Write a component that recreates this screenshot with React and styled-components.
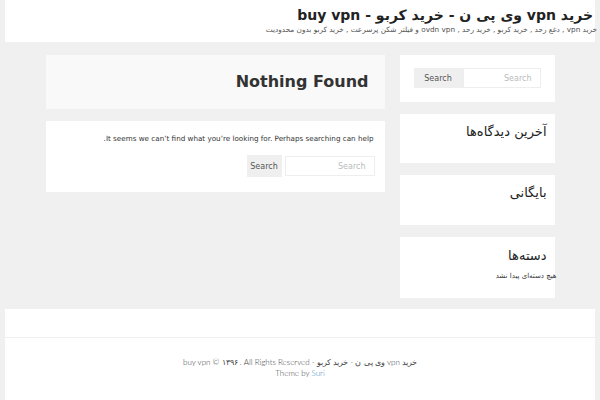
import React from 'react';
import styled, { createGlobalStyle } from 'styled-components';

const GlobalStyle = createGlobalStyle`
  html, body {
    margin: 0;
    padding: 0;
    background: #f0f0f0;
  }
  body {
    direction: rtl;
    font-family: "DejaVu Sans", sans-serif;
    color: #333;
  }
`;

const Header = styled.header`
  margin: 0 5px;
  height: 42px;
  background: #fff;
  padding: 7px 2px 0 0;
  box-sizing: border-box;
  text-align: right;
`;

const SiteTitle = styled.h1`
  margin: 0;
  font-size: 14px;
  line-height: 17px;
  font-weight: bold;
  color: #222;
`;

const Tagline = styled.p`
  margin: 0 -4px 0 0;
  font-size: 7.3px;
  line-height: 12px;
  color: #555;
  white-space: nowrap;
`;

const Content = styled.div`
  width: 509px;
  margin: 13px auto 0;
  display: flex;
  gap: 15px;
  align-items: flex-start;
`;

const Sidebar = styled.aside`
  width: 155px;
  display: flex;
  flex-direction: column;
  gap: 12px;
`;

const Main = styled.main`
  width: 339px;
  display: flex;
  flex-direction: column;
  gap: 12px;
`;

const Box = styled.section`
  background: ${p => (p.$tint ? '#f9f9f9' : '#fff')};
  height: ${p => p.$h}px;
  box-sizing: border-box;
  padding: ${p => p.$pad || '0'};
`;

const PageTitle = styled.h2`
  margin: 0;
  font-size: 16px;
  line-height: 54px;
  font-weight: bold;
  color: #333;
  padding-right: 16px;
`;

const Notice = styled.p`
  margin: 0;
  padding: 12px 11px 0 0;
  font-size: 7.2px;
  line-height: 12px;
  color: #333;
`;

const SearchForm = styled.form`
  display: flex;
  align-items: center;
  gap: ${p => p.$gap || 0}px;
  margin: ${p => p.$m || 0};
`;

const SearchInput = styled.input`
  width: ${p => p.$w}px;
  height: 20px;
  box-sizing: border-box;
  border: 1px solid #eee;
  background: #fff;
  font: 8px "DejaVu Sans", sans-serif;
  padding: 0 8px;
  direction: rtl;
  outline: none;
  &::placeholder { color: #bbb; }
`;

const SearchButton = styled.button`
  width: ${p => p.$w}px;
  height: ${p => p.$h || 20}px;
  border: none;
  background: #efefef;
  color: #555;
  font: 8px "DejaVu Sans", sans-serif;
  padding: 0;
`;

const WidgetTitle = styled.h3`
  margin: 0;
  padding: ${p => p.$top || 10}px 8px 0 0;
  font-size: 13px;
  font-weight: normal;
  line-height: 16px;
  letter-spacing: 1.2px;
  color: #222;
`;

const WidgetText = styled.p`
  margin: 8px -2px 0 0;
  font-size: 7px;
  line-height: 9px;
  color: #333;
`;

const Footer = styled.footer`
  margin: 11px 5px 0;
  background: #fff;
`;

const FooterTop = styled.div`
  height: 28px;
  border-bottom: 1px solid #eee;
`;

const FooterBottom = styled.div`
  height: 80px;
  padding-top: 19px;
  box-sizing: border-box;
  text-align: center;
  font-family: Lato, sans-serif;
  font-weight: 300;
  font-size: 8px;
  line-height: 11px;
  color: #444;
`;

const Link = styled.a`
  color: #4a8fc2;
  text-decoration: none;
`;

export default function App() {
  return (
    <>
      <GlobalStyle />
      <Header>
        <SiteTitle>خرید vpn وی پی ن - خرید کربو - buy vpn</SiteTitle>
        <Tagline>خرید vpn , دغع رحد , خرید کربو , خرید رحد , ovdn vpn و فیلتر شکن پرسرعت , خرید کربو بدون محدودیت</Tagline>
      </Header>
      <Content>
        <Sidebar>
          <Box $h={47} $pad="13px 14px 0 0">
            <SearchForm>
              <SearchInput $w={78} placeholder="Search" />
              <SearchButton $w={49} type="button">Search</SearchButton>
            </SearchForm>
          </Box>
          <Box $h={49}>
            <WidgetTitle>آخرین دیدگاه‌ها</WidgetTitle>
          </Box>
          <Box $h={50}>
            <WidgetTitle>بایگانی</WidgetTitle>
          </Box>
          <Box $h={61}>
            <WidgetTitle $top={11}>دسته‌ها</WidgetTitle>
            <WidgetText>هیچ دسته‌ای پیدا نشد</WidgetText>
          </Box>
        </Sidebar>
        <Main>
          <Box $h={54} $tint>
            <PageTitle>Nothing Found</PageTitle>
          </Box>
          <Box $h={71}>
            <Notice>It seems we can’t find what you’re looking for. Perhaps searching can help.</Notice>
            <SearchForm $gap={3} $m="10px 10px 0 0">
              <SearchInput $w={90} placeholder="Search" />
              <SearchButton $w={35} $h={22} type="button">Search</SearchButton>
            </SearchForm>
          </Box>
        </Main>
      </Content>
      <Footer>
        <FooterTop />
        <FooterBottom>
          خرید vpn وی پی ن - خرید کربو - buy vpn © ۱۳۹۶ . All Rights Reserved
          <br />
          Theme by <Link href="#">Suri</Link>
        </FooterBottom>
      </Footer>
    </>
  );
}
